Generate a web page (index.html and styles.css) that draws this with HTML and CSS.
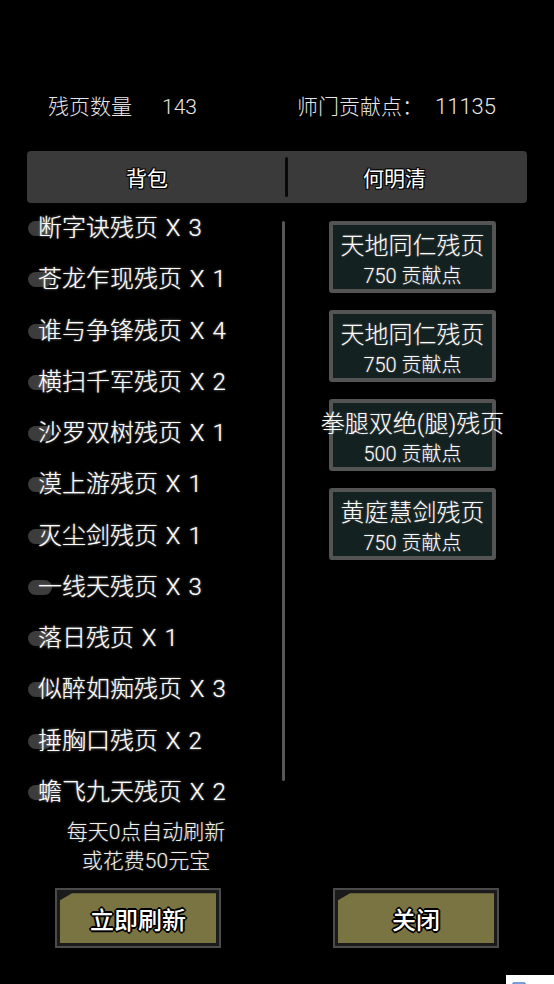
FILE: index.html
```html
<!DOCTYPE html>
<html lang="zh-CN">
<head>
  <meta charset="UTF-8" />
  <meta name="viewport" content="width=device-width, initial-scale=1.0"/>
  <title>残页兑换</title>
  <link rel="stylesheet" href="styles.css">
</head>
<body>
  <div class="page">
    <div class="stats">
      <div class="stat"><span>残页数量</span><span class="num">143</span></div>
      <div class="stat"><span>师门贡献点：</span><span class="num">11135</span></div>
    </div>

    <div class="tabs">
      <div class="tab tab-bag">背包</div>
      <div class="tab-divider"></div>
      <div class="tab tab-master">何明清</div>
    </div>

    <div class="main">
      <div class="bag">
        <ul class="pages">
          <li>断字诀残页 X 3</li>
          <li>苍龙乍现残页 X 1</li>
          <li>谁与争锋残页 X 4</li>
          <li>横扫千军残页 X 2</li>
          <li>沙罗双树残页 X 1</li>
          <li>漠上游残页 X 1</li>
          <li>灭尘剑残页 X 1</li>
          <li>一线天残页 X 3</li>
          <li>落日残页 X 1</li>
          <li>似醉如痴残页 X 3</li>
          <li>捶胸口残页 X 2</li>
          <li>蟾飞九天残页 X 2</li>
        </ul>
        <p class="note">每天0点自动刷新<br>或花费50元宝</p>
      </div>
      <div class="scrollbar"></div>
      <div class="shop">
        <div class="offer">
          <div class="offer-name">天地同仁残页</div>
          <div class="offer-cost">750 贡献点</div>
        </div>
        <div class="offer">
          <div class="offer-name">天地同仁残页</div>
          <div class="offer-cost">750 贡献点</div>
        </div>
        <div class="offer">
          <div class="offer-name offer-name-long">拳腿双绝(腿)残页</div>
          <div class="offer-cost">500 贡献点</div>
        </div>
        <div class="offer">
          <div class="offer-name">黄庭慧剑残页</div>
          <div class="offer-cost">750 贡献点</div>
        </div>
      </div>
    </div>

    <div class="actions">
      <button class="btn btn-refresh"><span>立即刷新</span></button>
      <button class="btn btn-close"><span>关闭</span></button>
    </div>
  </div>

  <div class="corner-tip">
    <svg width="14" height="10" viewBox="0 0 14 10"><rect x="1" y="1" width="12" height="9" rx="1" fill="none" stroke="#4a7fd0" stroke-width="1.5"/></svg>
  </div>
</body>
</html>
```

FILE: styles.css
```css
* {
  margin: 0;
  padding: 0;
  box-sizing: border-box;
}
body {
  background: #000;
  color: #e8e8e8;
  font-family: Roboto, "Noto Sans CJK SC", sans-serif;
  font-weight: 300;
  width: 554px;
  height: 984px;
  overflow: hidden;
  position: relative;
}
.page {
  padding: 94px 27px 0 27px;
}
.stats {
  display: grid;
  grid-template-columns: 250px 250px;
  font-size: 21px;
  line-height: 26px;
  color: #e6e6e6;
}
.stat {
  padding-left: 21px;
}
.stat .num {
  margin-left: 30px;
}
.stat:last-child {
  padding-left: 20px;
}
.stat:last-child .num {
  margin-left: 12px;
  font-size: 22px;
}
.tabs {
  margin-top: 31px;
  height: 52px;
  background: #3a3a3a;
  border-radius: 4px;
  display: flex;
  align-items: center;
  font-size: 21px;
  font-weight: 400;
  color: #fff;
  text-shadow: -1px -1px 0 #000, 1px -1px 0 #000, -1px 1px 0 #000, 1px 1px 0 #000, 0 0 2px #000;
}
.tab {
  text-align: center;
}
.tab-bag {
  width: 258px;
  padding-right: 18px;
}
.tab-divider {
  width: 3px;
  height: 40px;
  background: #080808;
  border-radius: 2px;
}
.tab-master {
  flex: 1;
  padding-right: 26px;
}
.main {
  display: flex;
}
.bag {
  width: 255px;
}
.pages {
  list-style: none;
}
.pages li {
  position: relative;
  height: 51.27px;
  line-height: 51px;
  padding-left: 11px;
  font-size: 24px;
  color: #fff;
  white-space: nowrap;
  word-spacing: 2px;
  text-shadow: 0 0 3px #777, 0 0 1px #999;
}
.pages li::before {
  content: "";
  position: absolute;
  left: 1px;
  top: 18px;
  width: 24px;
  height: 15px;
  border-radius: 8px;
  background: #3c3c3c;
  z-index: -1;
}
.note {
  padding-right: 17px;
  text-align: center;
  font-size: 21px;
  line-height: 29px;
  color: #f0f0f0;
  text-shadow: 0 0 2px #666;
}
.scrollbar {
  width: 3px;
  height: 560px;
  margin-top: 18px;
  background: #565656;
  border-radius: 2px;
}
.shop {
  padding: 18px 0 0 44px;
  display: flex;
  flex-direction: column;
  gap: 17px;
}
.offer {
  width: 167px;
  height: 72px;
  border: 4px solid #545454;
  border-radius: 3px;
  background: #132120;
  padding-top: 6px;
  text-align: center;
  color: #fff;
  text-shadow: 0 0 2px #777;
}
.offer-name {
  font-size: 24px;
  line-height: 30px;
  white-space: nowrap;
}
.offer-name-long {
  margin: 0 -30px;
}
.offer-cost {
  font-size: 20px;
  line-height: 30px;
}
.actions {
  margin-top: 12px;
  display: flex;
}
.btn {
  width: 166px;
  height: 60px;
  border: 2px solid #4b4b4b;
  background: #1b1b1b;
  padding: 3px;
  font-family: inherit;
  cursor: pointer;
}
.btn span {
  display: flex;
  align-items: center;
  justify-content: center;
  height: 100%;
  background: #7a7443;
  clip-path: polygon(12px 0, 100% 0, 100% 100%, 0 100%, 0 7px);
  font-size: 24px;
  font-weight: 500;
  color: #fff;
  text-shadow: -1px -1px 0 #000, 1px -1px 0 #000, -1px 1px 0 #000, 1px 1px 0 #000, 0 2px 0 #000, 2px 0 0 #000, -2px 0 0 #000, 0 -2px 0 #000;
}
.btn-refresh {
  margin-left: 28px;
}
.btn-close {
  margin-left: 112px;
}
.corner-tip {
  position: absolute;
  right: 0;
  bottom: 0;
  width: 48px;
  height: 9px;
  background: #fff;
  overflow: hidden;
  padding: 2px 0 0 6px;
}
```
